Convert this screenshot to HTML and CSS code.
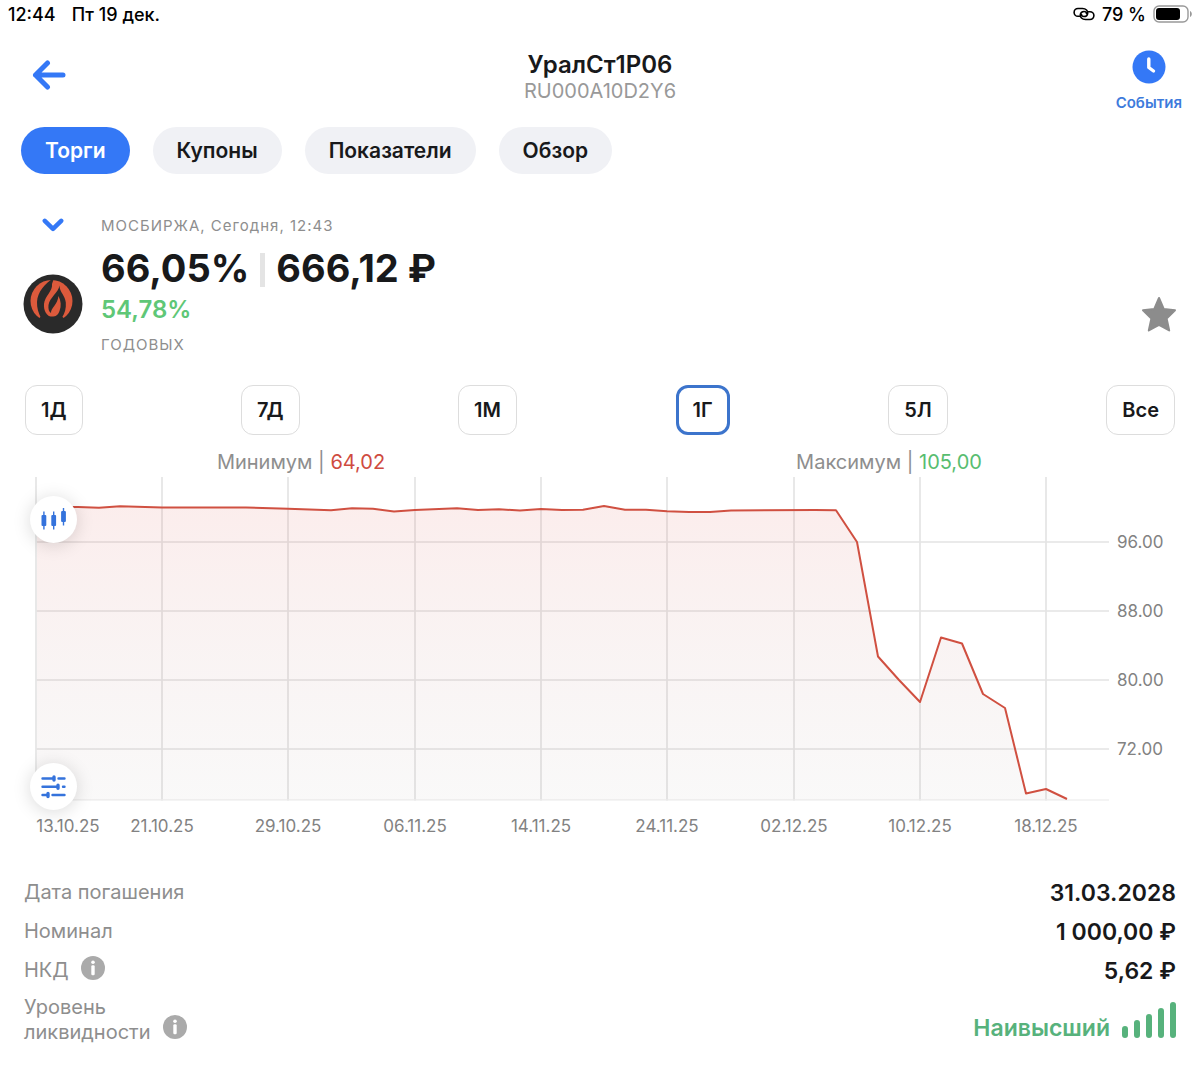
FILE: index.html
```html
<!DOCTYPE html>
<html lang="ru">
<head>
  <meta charset="UTF-8">
  <meta name="viewport" content="width=device-width, initial-scale=1">
  <title>УралСт1Р06</title>
  <link rel="stylesheet" href="styles.css">
</head>
<body>
  <div class="status-bar">
    <div class="status-left">
      <span>12:44</span>
      <span>Пт 19 дек.</span>
    </div>
    <div class="status-right">
      <svg class="link-icon" viewBox="0 0 22 14" width="22" height="14" fill="none" stroke="#000" stroke-width="1.6" stroke-linecap="round">
        <path d="M6.500 9.300H5a3.900 3.900 0 0 1 0-7.800h4.500c3.500 0 5.500 2.300 5.200 4.800-.300 2-2 3.200-3.700 3.200-1.500 0-2.500-1-2.500-2"/>
        <path d="M15.500 4.700H17a3.900 3.900 0 0 1 0 7.800h-4.500c-3.500 0-5.500-2.300-5.200-4.800.300-2 2-3.200 3.700-3.200 1.500 0 2.500 1 2.500 2"/>
      </svg>
      <span>79 %</span>
      <svg viewBox="0 0 39 18" width="39" height="18">
        <rect x="1" y="1" width="34" height="16" rx="5" fill="none" stroke="#999" stroke-width="1.4"/>
        <rect x="3" y="3" width="24" height="12" rx="3"/>
        <path d="M37 6v6c2.400-1 2.400-5 0-6z" fill="#999"/>
      </svg>
    </div>
  </div>

  <header class="header">
    <button class="back-btn" aria-label="Назад">
      <svg viewBox="0 0 34 30" width="34" height="30" fill="none" stroke="#3478f6" stroke-width="5" stroke-linecap="round" stroke-linejoin="round">
        <path d="M31 15H3.500M15.500 3L3.500 15l12 12"/>
      </svg>
    </button>
    <div class="title">
      <h1>УралСт1Р06</h1>
      <p>RU000A10D2Y6</p>
    </div>
    <button class="events-btn">
      <svg viewBox="0 0 34 34" width="34" height="34">
        <circle cx="17" cy="17" r="16.500" fill="#3478f6"/>
        <path d="M16.800 9v8.500l4.700 3.500" fill="none" stroke="#fff" stroke-width="3.400" stroke-linecap="round" stroke-linejoin="round"/>
      </svg>
      События
    </button>
  </header>

  <nav class="tabs">
    <button class="tab active">Торги</button>
    <button class="tab">Купоны</button>
    <button class="tab">Показатели</button>
    <button class="tab">Обзор</button>
  </nav>

  <main>
    <section class="quote">
      <div class="quote-side">
        <button class="collapse-btn" aria-label="Свернуть">
          <svg viewBox="0 0 22 14" width="22" height="14" fill="none" stroke="#3478f6" stroke-width="4.500" stroke-linecap="round" stroke-linejoin="round">
            <path d="M2.800 2.800l8.200 8 8.200-8"/>
          </svg>
        </button>
        <svg class="logo" viewBox="0 0 60 60" width="60" height="60">
          <circle cx="30" cy="30" r="29.500" fill="#2a2a2a"/>
          <circle cx="28.500" cy="27" r="21" fill="#dc5a3c"/>
          <g fill="#2a2a2a">
            <path d="M31 4C22 9 14.500 18 14 28c-.200 6 1.500 11 4 16h12C23 42 20.500 36 21 30c.700-8 9-13 8-20z"/>
            <path d="M36.500 11.500c-1 7-10 12-11 19.500-.400 4 .300 6.500 2.500 8-.300-5 6.500-8 7.500-17 2.500 5 3 10 1 15-1.500 4-4 6-8.500 6.500H39c2.800-4 4.300-9 3.800-15C42.200 21 36.500 18.500 36.500 11.500z"/>
            <path d="M13 47l5-4.500h21l5 4.500v6H13z"/>
          </g>
        </svg>
      </div>
      <div class="quote-info">
        <p class="caption">МОСБИРЖА, Сегодня, 12:43</p>
        <p class="price"><span>66,05%</span><span class="divider"></span><span>666,12 ₽</span></p>
        <p class="yield">54,78%</p>
        <p class="caption">ГОДОВЫХ</p>
      </div>
      <button class="favorite-btn" aria-label="В избранное">
        <svg viewBox="0 0 36 36" width="36" height="36" fill="#8c8c8c" stroke="#8c8c8c" stroke-width="2" stroke-linejoin="round">
          <path d="M18 2l4.700 11 11.300 1.200-8.400 8.300 2.600 12L18 28.800 7.800 34.500l2.600-12L2 14.200 13.300 13z"/>
        </svg>
      </button>
    </section>

    <div class="periods">
      <button class="period">1Д</button>
      <button class="period">7Д</button>
      <button class="period">1М</button>
      <button class="period active">1Г</button>
      <button class="period">5Л</button>
      <button class="period">Все</button>
    </div>

    <div class="range">
      <p>Минимум | <span class="red">64,02</span></p>
      <p>Максимум | <span class="green">105,00</span></p>
    </div>

    <section class="chart">
      <svg class="chart-plot" viewBox="0 477 1200 365">
        <defs>
          <linearGradient id="area" x1="0" y1="0" x2="0" y2="1">
            <stop offset="0" stop-color="#d83a30" stop-opacity="0.09"/>
            <stop offset="1" stop-color="#786464" stop-opacity="0.04"/>
          </linearGradient>
        </defs>
        <g class="grid">
          <path d="M36 477V801M162 477V801M288 477V801M415 477V801M541 477V801M667 477V801M794 477V801M920 477V801M1046 477V801"/>
          <path d="M36 542H1109M36 611H1109M36 680H1109M36 749H1109"/>
          <path class="baseline" d="M36 800H1109"/>
        </g>
        <path fill="url(#area)" d="M37 507L78 507 99 507.700 120 506.300 162 507.500 246 507.500 288 508.700 331 510.200 352 508.300 373 508.800 394 511.500 415 510 457 508.200 478 510 499 509.300 520 510.600 541 509 562 510 583 509.800 604 506 625 509.800 646 509.700 667 511.200 689 512 710 512 731 510.500 815 510 836 510.300 857 542 878 656.500 899 680 920 702 941 637.500 962 643.500 983 694 1005 708 1026 793.500 1046 789 1067 799V800H37z"/>
        <path class="line" d="M37 507L78 507 99 507.700 120 506.300 162 507.500 246 507.500 288 508.700 331 510.200 352 508.300 373 508.800 394 511.500 415 510 457 508.200 478 510 499 509.300 520 510.600 541 509 562 510 583 509.800 604 506 625 509.800 646 509.700 667 511.200 689 512 710 512 731 510.500 815 510 836 510.300 857 542 878 656.500 899 680 920 702 941 637.500 962 643.500 983 694 1005 708 1026 793.500 1046 789 1067 799"/>
        <g class="axis">
          <text x="1117" y="548">96.00</text>
          <text x="1117" y="617">88.00</text>
          <text x="1117" y="686">80.00</text>
          <text x="1117" y="755">72.00</text>
        </g>
        <g class="axis dates">
          <text x="68" y="832">13.10.25</text>
          <text x="162" y="832">21.10.25</text>
          <text x="288" y="832">29.10.25</text>
          <text x="415" y="832">06.11.25</text>
          <text x="541" y="832">14.11.25</text>
          <text x="667" y="832">24.11.25</text>
          <text x="794" y="832">02.12.25</text>
          <text x="920" y="832">10.12.25</text>
          <text x="1046" y="832">18.12.25</text>
        </g>
      </svg>
      <button class="round-btn chart-type" aria-label="Тип графика">
        <svg viewBox="0 0 26 24" width="26" height="24" fill="#3573dc">
          <rect x="0.500" y="7" width="4.800" height="11" rx="1"/><rect x="2.200" y="3.500" width="1.400" height="18"/>
          <rect x="10.300" y="7" width="4.800" height="11" rx="1"/><rect x="12" y="3.500" width="1.400" height="18"/>
          <rect x="20.100" y="3" width="4.800" height="11" rx="1"/><rect x="21.800" y="0" width="1.400" height="17.500"/>
        </svg>
      </button>
      <button class="round-btn chart-settings" aria-label="Настройки графика">
        <svg viewBox="0 0 26 24" width="26" height="24" fill="none" stroke="#3573dc" stroke-width="2.400" stroke-linecap="round">
          <path d="M1.500 3.500H12M17.500 3.500h6M1.500 11.800H16M22 11.800h1.500M1.500 20H6M11.500 20h12"/>
          <path stroke-width="3.400" d="M13 2v3M17 10.300v3M7 18.500v3"/>
        </svg>
      </button>
    </section>

    <dl class="details">
      <div class="row">
        <dt>Дата погашения</dt>
        <dd>31.03.2028</dd>
      </div>
      <div class="row">
        <dt>Номинал</dt>
        <dd>1 000,00 ₽</dd>
      </div>
      <div class="row">
        <dt>НКД
          <button class="info-btn" aria-label="Что такое НКД">
            <svg viewBox="0 0 24 24" width="24" height="24"><circle cx="12" cy="12" r="12" fill="#aaa"/><circle cx="12" cy="6.300" r="1.800" fill="#fff"/><rect x="10.300" y="9.300" width="3.400" height="10" rx="1.200" fill="#fff"/></svg>
          </button>
        </dt>
        <dd>5,62 ₽</dd>
      </div>
      <div class="row tall">
        <dt>Уровень<br>ликвидности
          <button class="info-btn" aria-label="Об уровне ликвидности">
            <svg viewBox="0 0 24 24" width="24" height="24"><circle cx="12" cy="12" r="12" fill="#aaa"/><circle cx="12" cy="6.300" r="1.800" fill="#fff"/><rect x="10.300" y="9.300" width="3.400" height="10" rx="1.200" fill="#fff"/></svg>
          </button>
        </dt>
        <dd class="liquidity">Наивысший
          <svg viewBox="0 0 54 36" width="54" height="36" stroke="#57b27c" stroke-width="6" stroke-linecap="round">
            <path d="M3 27v6M15 21v12M27 15v18M39 9v24M51 3v30"/>
          </svg>
        </dd>
      </div>
    </dl>
  </main>
</body>
</html>
```
FILE: styles.css
```css
* { margin: 0; padding: 0; box-sizing: border-box; }
body {
  font-family: Inter, "Liberation Sans", sans-serif;
  background-color: #fff;
  color: #18191b;
}
button {
  font: inherit;
  color: inherit;
  background: none;
  border: none;
  cursor: pointer;
}
svg { display: block; flex-shrink: 0; }

.status-bar {
  display: flex;
  justify-content: space-between;
  align-items: center;
  height: 28px;
  padding: 0 8px;
  font-size: 18px;
  font-weight: 500;
  color: #000;
}
.status-left { display: flex; gap: 16px; }
.status-right { display: flex; align-items: center; gap: 7px; }

.header {
  display: grid;
  grid-template-columns: 1fr auto 1fr;
  align-items: start;
  height: 99px;
  padding: 22px 18px 0;
}
.back-btn { justify-self: start; padding: 10px 14px; }
.title { text-align: center; }
.title h1 {
  font-size: 24px;
  font-weight: 600;
  line-height: 30px;
}
.title p {
  font-size: 20px;
  line-height: 22px;
  color: #999;
}
.events-btn {
  justify-self: end;
  display: flex;
  flex-direction: column;
  align-items: center;
  gap: 10px;
  font-size: 15px;
  line-height: 18px;
  font-weight: 600;
  color: #3d7bdc;
}

.tabs { display: flex; gap: 23px; padding: 0 21px; }
.tab {
  height: 47px;
  padding: 0 24px;
  border-radius: 24px;
  background-color: #f0f1f5;
  font-size: 21px;
  font-weight: 600;
}
.tab.active { background-color: #3478f6; color: #fff; }

.quote {
  display: flex;
  gap: 18px;
  padding: 42px 23px 0 23px;
}
.quote-side {
  display: flex;
  flex-direction: column;
  align-items: center;
  gap: 42px;
  padding-top: 2px;
}
.caption {
  font-size: 15px;
  line-height: 20px;
  letter-spacing: 1px;
  color: #8e8e8e;
}
.price {
  display: flex;
  align-items: center;
  font-size: 38px;
  font-weight: 700;
  line-height: 48px;
  margin-top: 8px;
}
.divider {
  width: 5px;
  height: 34px;
  margin: 4px 11px 0;
  background-color: #e4e4e4;
}
.yield {
  font-size: 24px;
  font-weight: 600;
  line-height: 32px;
  margin: 2px 0 9px;
  color: #5fc777;
}
.favorite-btn { margin-left: auto; align-self: flex-end; margin-bottom: 23px; }

.periods {
  display: flex;
  justify-content: space-between;
  padding: 30px 25px 0;
}
.period {
  height: 50px;
  padding: 0 15px;
  border: 1px solid #ddd;
  border-radius: 12px;
  font-size: 20px;
  font-weight: 600;
}
.period.active { padding: 0 14px; border: 3px solid #3c74cc; }

.range {
  display: grid;
  grid-template-columns: 1fr 1fr;
  padding: 12px 17px 0 7px;
  text-align: center;
  font-size: 20px;
  line-height: 30px;
  color: #8e8e8e;
}
.red { color: #cf4b40; }
.green { color: #58bd70; }

.chart { position: relative; }
.chart-plot { width: 100%; height: auto; }
.grid path { stroke: #e3e3e3; stroke-width: 1.6; }
.grid .baseline { stroke: #f0f0f0; }
.line { fill: none; stroke: #d05041; stroke-width: 2; stroke-linejoin: round; }
.axis { font-size: 17px; fill: #828282; }
.dates { text-anchor: middle; }
.round-btn {
  position: absolute;
  left: 30px;
  width: 47px;
  height: 47px;
  display: flex;
  align-items: center;
  justify-content: center;
  border-radius: 50%;
  background-color: #fff;
  box-shadow: 0 2px 18px rgba(0, 0, 0, 0.15);
}
.chart-type { top: 19px; }
.chart-settings { bottom: 32px; }

.details { padding: 31px 24px 24px; }
.row {
  display: flex;
  justify-content: space-between;
  align-items: center;
  min-height: 39px;
}
.row dt {
  display: flex;
  align-items: center;
  gap: 12px;
  font-size: 20px;
  line-height: 25px;
  color: #8e8e8e;
}
.row dd { font-size: 23px; font-weight: 600; }
.info-btn { padding-bottom: 6px; }
.row.tall { min-height: 60px; }
.row.tall dt { align-items: flex-end; }
.row .liquidity {
  display: flex;
  align-items: flex-end;
  gap: 12px;
  line-height: 20px;
  color: #57b27c;
}
```
